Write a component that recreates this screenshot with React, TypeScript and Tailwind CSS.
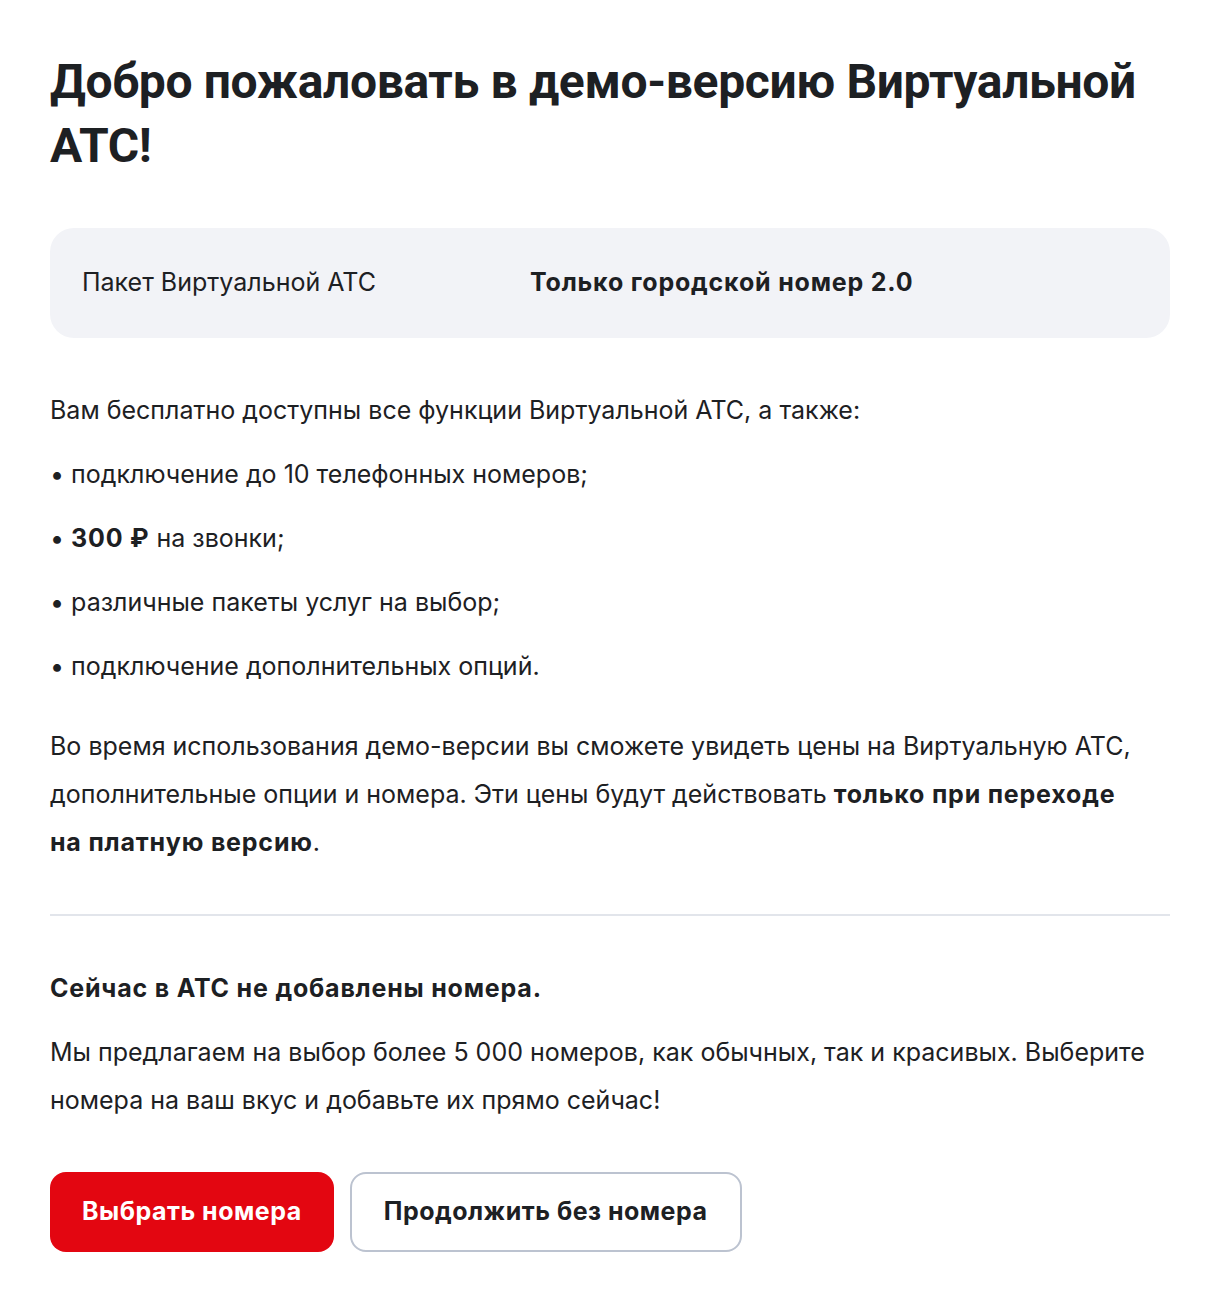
export default function App() {
  return (
    <div className="min-h-[1306px] bg-white pl-[50px] pt-[50px] pb-12 text-[#1d2023] font-['Inter',sans-serif]">
      <div className="w-[1120px]">
        <h1 className="font-['Roboto',sans-serif] text-[48px] font-bold leading-[64px] tracking-[-0.35px]">
          Добро пожаловать в демо-версию Виртуальной АТС!
        </h1>

        <div className="mt-[50px] h-[110px] rounded-[24px] bg-[#f2f3f7] px-8 flex items-center text-[25px]">
          <span className="w-[448px]">Пакет Виртуальной АТС</span>
          <span className="font-bold tracking-[0.8px]">Только городской номер 2.0</span>
        </div>

        <div className="mt-12 text-[25px] leading-[48px] flex flex-col gap-4">
          <p>Вам бесплатно доступны все функции Виртуальной АТС, а также:</p>
          <p>• подключение до 10 телефонных номеров;</p>
          <p>
            • <b className="font-bold tracking-[0.8px]">300 ₽</b> на звонки;
          </p>
          <p>• различные пакеты услуг на выбор;</p>
          <p>• подключение дополнительных опций.</p>
          <p className="mt-4 max-w-[1100px]">
            Во время использования демо-версии вы сможете увидеть цены на Виртуальную АТС, дополнительные опции и
            номера. Эти цены будут действовать{" "}
            <b className="font-bold tracking-[0.8px]">только при переходе на платную версию</b>.
          </p>
        </div>

        <hr className="mt-12 border-0 h-[2px] bg-[#e2e5eb]" />

        <h2 className="mt-12 text-[25px] leading-[48px] font-bold tracking-[0.8px]">
          Сейчас в АТС не добавлены номера.
        </h2>
        <p className="mt-4 text-[25px] leading-[48px]">
          Мы предлагаем на выбор более 5 000 номеров, как обычных, так и красивых. Выберите номера на ваш вкус и
          добавьте их прямо сейчас!
        </p>

        <div className="mt-12 flex gap-4">
          <button className="h-20 px-8 rounded-2xl bg-[#e30611] text-white text-[25px] font-bold tracking-[0.5px]">
            Выбрать номера
          </button>
          <button className="h-20 px-8 rounded-2xl border-2 border-[#bcc3d0] bg-white text-[25px] font-bold tracking-[0.5px]">
            Продолжить без номера
          </button>
        </div>
      </div>
    </div>
  );
}
